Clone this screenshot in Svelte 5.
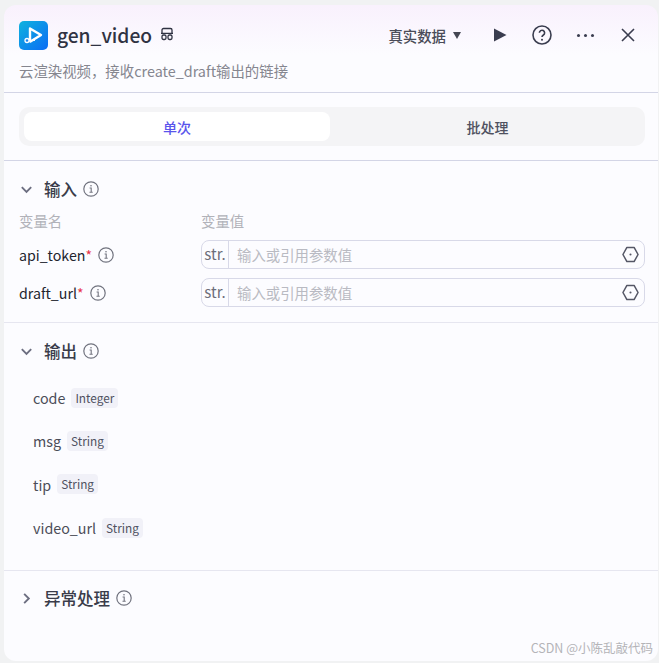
<script lang="ts">
    const inputs = [
        { name: 'api_token' },
        { name: 'draft_url' }
    ];
    const outputs = [
        { name: 'code', type: 'Integer' },
        { name: 'msg', type: 'String' },
        { name: 'tip', type: 'String' },
        { name: 'video_url', type: 'String' }
    ];
</script>

{#snippet info()}
    <svg class="info" viewBox="0 0 16 16" fill="none" stroke="currentColor">
        <circle cx="8" cy="8" r="7.2" stroke-width="1.2" />
        <path d="M6.6 7h1.6v4M6.5 11.2h3.2" stroke-width="1.1" />
        <circle cx="8" cy="4.8" r="0.8" fill="currentColor" stroke="none" />
    </svg>
{/snippet}

{#snippet chevron(open: boolean)}
    <svg class="chevron" class:closed={!open} viewBox="0 0 16 16" fill="none" stroke="currentColor" stroke-width="2">
        <path d="M3 5.5 8 10.5 13 5.5" />
    </svg>
{/snippet}

<div class="page">
    <div class="panel">
        <header class="head">
            <div class="title-row">
                <div class="logo">
                    <svg viewBox="0 0 29 29">
                        <path d="M11 7.5 22 14 11.5 20.5 11 19Z" fill="none" stroke="#fff" stroke-width="2.4" stroke-linejoin="round" />
                        <path d="M10 19.5 16 19.5" stroke="#fff" stroke-width="1.2" />
                        <circle cx="8" cy="19.5" r="2" fill="#1d84ee" stroke="#fff" stroke-width="1.3" />
                    </svg>
                </div>
                <h1>gen_video</h1>
                <svg class="badge" viewBox="0 0 14 14" fill="none" stroke="currentColor" stroke-width="1.3">
                    <path d="M2 6V3a1.5 1.5 0 0 1 1.5-1.5h7A1.5 1.5 0 0 1 12 3v3M1 6.3h12" />
                    <rect x="2" y="8" width="4" height="4.5" rx="1.4" />
                    <rect x="8" y="8" width="4" height="4.5" rx="1.4" />
                </svg>
                <div class="actions">
                    <span class="mode">真实数据<i class="caret"></i></span>
                    <svg class="act play" viewBox="0 0 14 14"><path d="M1 0.5 13.5 7 1 13.5Z" fill="currentColor" /></svg>
                    <svg class="act help" viewBox="0 0 20 20" fill="none" stroke="currentColor">
                        <circle cx="10" cy="10" r="9" stroke-width="1.6" />
                        <path d="M7.4 7.8a2.6 2.6 0 1 1 4 2.2c-.9.6-1.4 1-1.4 2.1" stroke-width="1.6" />
                        <circle cx="10" cy="14.7" r="1" fill="currentColor" stroke="none" />
                    </svg>
                    <span class="more"><i></i><i></i><i></i></span>
                    <svg class="act close" viewBox="0 0 14 14" fill="none" stroke="currentColor" stroke-width="1.6">
                        <path d="M1 1 13 13M13 1 1 13" />
                    </svg>
                </div>
            </div>
            <p class="desc">云渲染视频，接收create_draft输出的链接</p>
        </header>

        <section class="tabs-wrap">
            <div class="tabs">
                <div class="tab active">单次</div>
                <div class="tab">批处理</div>
            </div>
        </section>

        <section class="block input-block">
            <div class="block-title">{@render chevron(true)}<span>输入</span>{@render info()}</div>
            <div class="grid-row labels">
                <span>变量名</span>
                <span>变量值</span>
            </div>
            {#each inputs as item}
                <div class="grid-row field">
                    <div class="field-name">{item.name}<em>*</em>{@render info()}</div>
                    <div class="field-input">
                        <span class="str">str.</span>
                        <span class="placeholder">输入或引用参数值</span>
                        <svg class="ref" viewBox="0 0 18 18" fill="none" stroke="currentColor" stroke-width="1.6">
                            <path d="M5.2 1.5h7.6L17 9l-4.2 7.5H5.2L1 9Z" stroke-linejoin="round" />
                            <circle cx="9" cy="9" r="1.1" fill="currentColor" stroke="none" />
                        </svg>
                    </div>
                </div>
            {/each}
        </section>

        <section class="block output-block">
            <div class="block-title">{@render chevron(true)}<span>输出</span>{@render info()}</div>
            <ul class="outputs">
                {#each outputs as item}
                    <li><span class="out-name">{item.name}</span><span class="tag">{item.type}</span></li>
                {/each}
            </ul>
        </section>

        <section class="block error-block">
            <div class="block-title">{@render chevron(false)}<span>异常处理</span>{@render info()}</div>
        </section>

        <span class="watermark">CSDN @小陈乱敲代码</span>
    </div>
</div>

<style>
    :global(body) {
        margin: 0;
        background: #fff;
    }

    .page {
        width: 659px;
        height: 663px;
        box-sizing: border-box;
        padding: 5px 1px 2px 4px;
        background: #f1f2f3;
        font-family: "Noto Sans CJK SC", "Noto Sans", sans-serif;
        color: #2f3242;
        overflow: hidden;
    }

    .panel {
        position: relative;
        height: 100%;
        box-sizing: border-box;
        border-radius: 12px;
        background: linear-gradient(180deg, #f9f1fd 0, #fcfcff 50px);
        overflow: hidden;
    }

    .head {
        height: 88px;
        box-sizing: border-box;
        padding: 15px 15px 0;
        border-bottom: 1px solid #d3d5e6;
    }

    .title-row {
        display: flex;
        align-items: center;
        height: 30px;
    }

    .logo {
        width: 29px;
        height: 29px;
        border-radius: 5px;
        background: linear-gradient(135deg, #10b3de 0%, #0a6cf5 100%);
    }

    .logo svg {
        display: block;
        width: 100%;
        height: 100%;
    }

    h1 {
        margin: 0 0 0 9px;
        font-size: 19.2px;
        font-weight: 500;
        line-height: 30px;
    }

    .badge {
        width: 14px;
        height: 14px;
        margin: 0 0 2px 8px;
    }

    .actions {
        display: flex;
        align-items: center;
        margin-left: auto;
        margin-right: 8px;
        color: #3a3d4f;
    }

    .mode {
        display: flex;
        align-items: center;
        font-size: 14.4px;
        font-weight: 500;
        color: #4a4c58;
    }

    .caret {
        width: 0;
        height: 0;
        margin-left: 7px;
        border-left: 4.5px solid transparent;
        border-right: 4.5px solid transparent;
        border-top: 7px solid #444652;
    }

    .act {
        display: block;
    }

    .play {
        width: 14px;
        height: 14px;
        margin-left: 32px;
    }

    .help {
        width: 20px;
        height: 20px;
        margin-left: 25px;
    }

    .more {
        display: flex;
        gap: 4px;
        margin-left: 25px;
    }

    .more i {
        width: 3px;
        height: 3px;
        border-radius: 50%;
        background: #3a3d4f;
    }

    .close {
        width: 14px;
        height: 14px;
        margin-left: 27px;
    }

    .desc {
        margin: 11px 0 0;
        font-size: 14.4px;
        line-height: 20px;
        color: #85868f;
    }

    .tabs-wrap {
        height: 68px;
        box-sizing: border-box;
        padding: 14px 13px 0 15px;
        border-bottom: 1px solid #d3d5e6;
    }

    .tabs {
        display: grid;
        grid-template-columns: 306px 1fr;
        height: 39px;
        box-sizing: border-box;
        padding: 5px 0 5px 5px;
        border-radius: 10px;
        background: #f4f4f6;
    }

    .tab {
        display: flex;
        align-items: center;
        justify-content: center;
        border-radius: 8px;
        font-size: 14px;
        font-weight: 500;
        color: #4f5160;
    }

    .tab.active {
        background: #fff;
        color: #5a55ec;
    }

    .block {
        box-sizing: border-box;
        padding: 0 13px 0 15px;
        border-bottom: 1px solid #e6e6f0;
    }

    .input-block {
        height: 162px;
        padding-top: 16px;
    }

    .output-block {
        height: 248px;
        padding-top: 16px;
    }

    .error-block {
        padding-top: 15px;
        border-bottom: none;
    }

    .block-title {
        display: flex;
        align-items: center;
        height: 24px;
        color: #3a3c4a;
    }

    .block-title span {
        margin-left: 10px;
        font-size: 16.5px;
        font-weight: 500;
    }

    .block-title .info {
        margin-left: 6px;
    }

    .chevron {
        width: 15px;
        height: 15px;
        color: #6c6e80;
    }

    .chevron.closed {
        transform: rotate(-90deg);
    }

    .info {
        width: 16px;
        height: 16px;
        color: #71737f;
        flex-shrink: 0;
    }

    .grid-row {
        display: grid;
        grid-template-columns: 182px 1fr;
        align-items: center;
    }

    .labels {
        margin-top: 9px;
        height: 20px;
        font-size: 14.4px;
        color: #b1b2b9;
    }

    .field {
        height: 38px;
    }

    .labels + .field {
        margin-top: 5px;
    }

    .field-name {
        display: flex;
        align-items: center;
        padding-top: 2px;
        font-size: 14.2px;
        color: #22242e;
    }

    .field-name em {
        font-style: normal;
        font-size: 14px;
        color: #e8334a;
    }

    .field-name .info {
        margin-left: 6px;
    }

    .field-input {
        display: flex;
        align-items: center;
        height: 29px;
        box-sizing: border-box;
        border: 1px solid #d8d9e8;
        border-radius: 8px;
        background: #fcfcff;
    }

    .str {
        width: 27px;
        height: 100%;
        box-sizing: border-box;
        flex-shrink: 0;
        border-right: 1px solid #d8d9e8;
        text-align: center;
        font-size: 15px;
        line-height: 25px;
        color: #6c6e7a;
    }

    .placeholder {
        margin-left: 8px;
        font-size: 14.4px;
        color: #b9bac2;
    }

    .ref {
        width: 17px;
        height: 17px;
        margin-left: auto;
        margin-right: 5px;
        color: #555766;
    }

    .outputs {
        display: grid;
        margin: 13px 0 0 14px;
        padding: 0;
        list-style: none;
        grid-auto-rows: 43.3px;
    }

    .outputs li {
        display: flex;
        align-items: center;
        gap: 6px;
    }

    .out-name {
        font-size: 14.3px;
        color: #4b4d58;
    }

    .tag {
        padding: 0 4px;
        height: 20px;
        border-radius: 4px;
        background: #f1f1f8;
        font-size: 11.8px;
        line-height: 20px;
        color: #4e5060;
    }

    .watermark {
        position: absolute;
        right: 5px;
        bottom: 4px;
        font-size: 12.5px;
        color: #b4b4b8;
    }
</style>
